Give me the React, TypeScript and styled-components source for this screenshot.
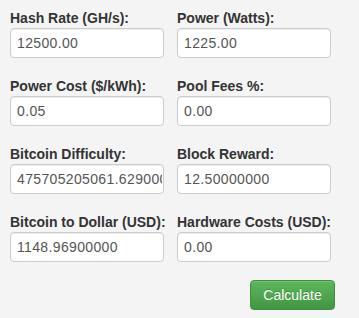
import { createGlobalStyle, styled } from 'styled-components';

const GlobalStyle = createGlobalStyle`
  html, body {
    margin: 0;
    padding: 0;
    background: #f4f4f4;
  }

  body {
    font-family: 'Liberation Sans', Arial, Helvetica, sans-serif;
    font-size: 14px;
    line-height: 20px;
    color: #333;
  }
`;

const Form = styled.form`
  padding: 8px 0 0 10px;
`;

const Grid = styled.div`
  display: grid;
  grid-template-columns: 154px 154px;
  column-gap: 13px;
  row-gap: 18px;
`;

const Field = styled.div`
  display: flex;
  flex-direction: column;
`;

const Label = styled.label`
  display: block;
  font-weight: bold;
  font-size: 14px;
  line-height: 20px;
  color: #333;
  white-space: nowrap;
`;

const Input = styled.input`
  box-sizing: border-box;
  width: 100%;
  height: 30px;
  margin: 0;
  padding: 0 1px 0 6px;
  font-family: inherit;
  font-size: 14px;
  letter-spacing: 0.35px;
  color: #555;
  background: #fff;
  border: 1px solid #ccc;
  border-radius: 4px;
  box-shadow: inset 0 1px 1px rgba(0, 0, 0, 0.075);
  outline: none;
`;

const Actions = styled.div`
  display: flex;
  justify-content: flex-end;
  width: 325px;
  margin-top: 18px;
`;

const Button = styled.button`
  box-sizing: border-box;
  width: 85px;
  height: 30px;
  padding: 0;
  font-family: inherit;
  font-size: 14px;
  color: #fff;
  text-shadow: 0 -1px 0 rgba(0, 0, 0, 0.2);
  background: linear-gradient(to bottom, #5cb85c 0%, #419641 100%);
  border: 1px solid #3e8f3e;
  border-radius: 4px;
  box-shadow: inset 0 1px 0 rgba(255, 255, 255, 0.15), 0 1px 1px rgba(0, 0, 0, 0.075);
  cursor: pointer;
`;

const fields = [
  { id: 'hashrate', label: 'Hash Rate (GH/s):', value: '12500.00' },
  { id: 'power', label: 'Power (Watts):', value: '1225.00' },
  { id: 'cost', label: 'Power Cost ($/kWh):', value: '0.05' },
  { id: 'fees', label: 'Pool Fees %:', value: '0.00' },
  { id: 'difficulty', label: 'Bitcoin Difficulty:', value: '475705205061.62900000' },
  { id: 'reward', label: 'Block Reward:', value: '12.50000000' },
  { id: 'price', label: 'Bitcoin to Dollar (USD):', value: '1148.96900000' },
  { id: 'hardware', label: 'Hardware Costs (USD):', value: '0.00' },
];

export default function App() {
  return (
    <>
      <GlobalStyle />
      <Form onSubmit={e => e.preventDefault()}>
        <Grid>
          {fields.map(f => (
            <Field key={f.id}>
              <Label htmlFor={f.id}>{f.label}</Label>
              <Input id={f.id} type='text' defaultValue={f.value} />
            </Field>
          ))}
        </Grid>
        <Actions>
          <Button type='submit'>Calculate</Button>
        </Actions>
      </Form>
    </>
  );
}
